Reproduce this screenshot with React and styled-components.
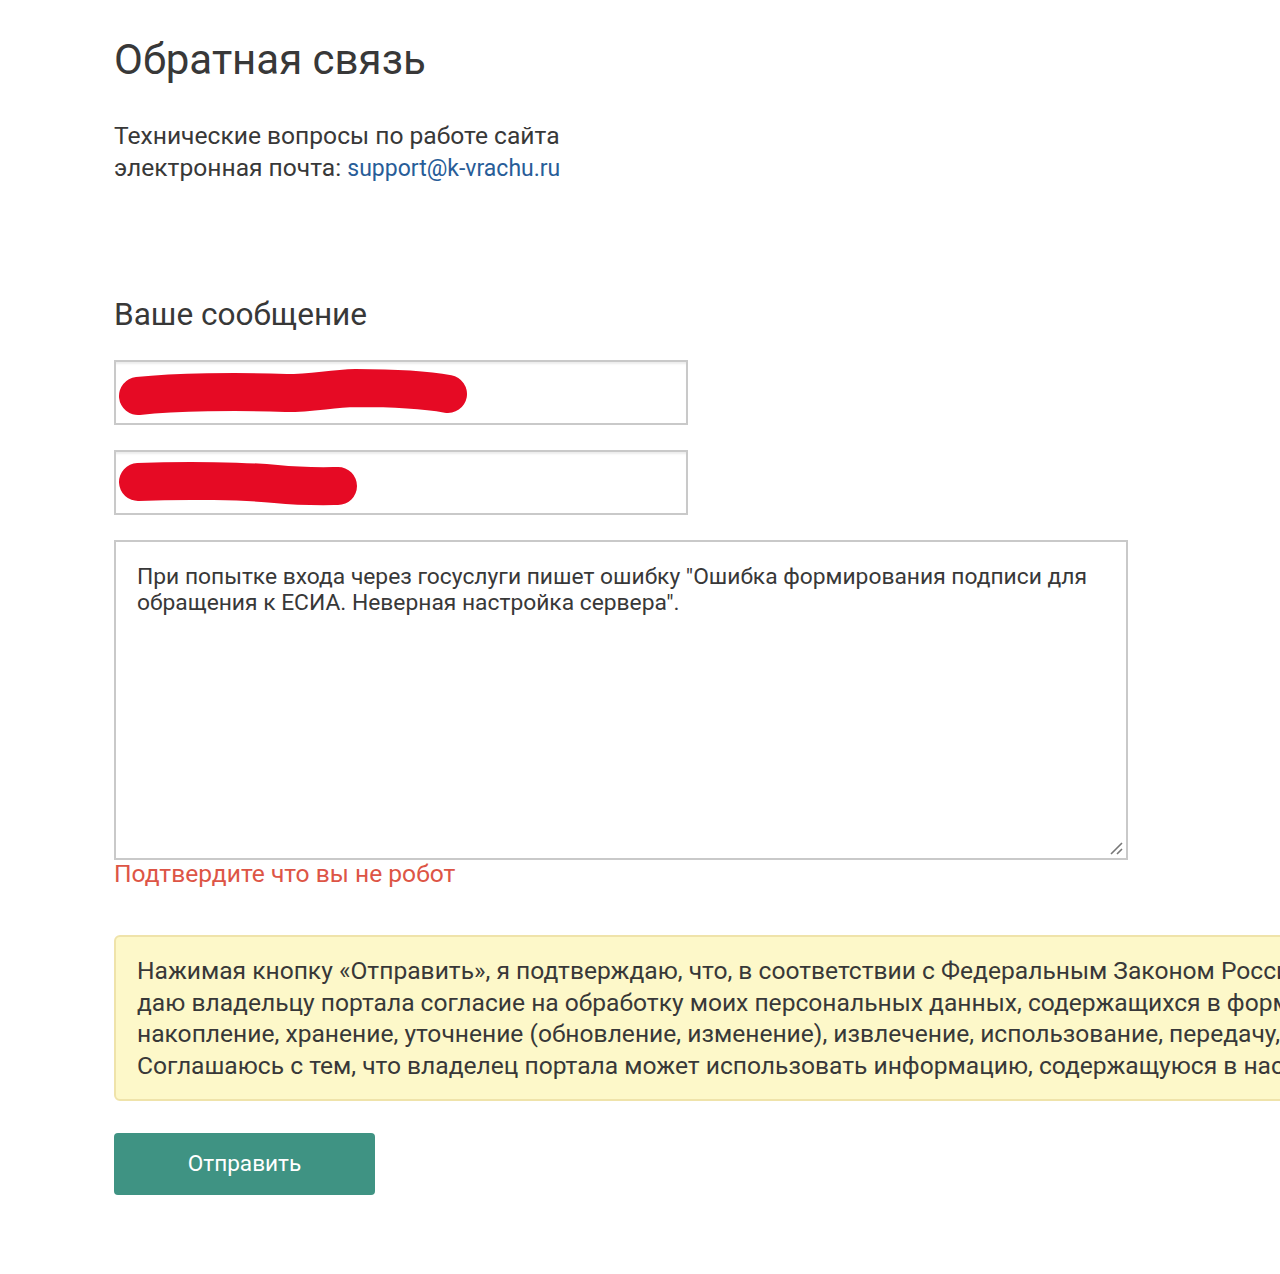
import React from "react";
import styled, { createGlobalStyle } from "styled-components";

const Global = createGlobalStyle`
  html, body { margin: 0; padding: 0; background: #fff; overflow-x: hidden; }
  body { font-family: Roboto, "Noto Sans", Arial, sans-serif; color: #3b3b3b; }
`;

const Page = styled.div`
  padding: 32px 0 0 114px;
  width: 1166px;
  overflow: hidden;
`;

const Title = styled.h1`
  margin: 0;
  font-size: 42px;
  line-height: 56px;
  font-weight: 400;
  color: #383838;
`;

const Info = styled.p`
  margin: 32px 0 0;
  font-size: 24.6px;
  line-height: 32px;
  color: #383838;
`;

const Link = styled.a`
  color: #285d98;
  text-decoration: none;
  font-size: 23px;
  line-height: 0;
`;

const Subtitle = styled.h2`
  margin: 111px 0 0;
  font-size: 31.6px;
  line-height: 40px;
  font-weight: 400;
  color: #383838;
`;

const Form = styled.div`
  display: flex;
  flex-direction: column;
  margin-top: 25px;
`;

const Field = styled.div`
  position: relative;
  width: 574px;
  height: 65px;
  box-sizing: border-box;
  border: 2px solid #c9c9c9;
  box-shadow: inset 0 3px 2px -1px #ececec;
  background: #fff;
  margin-bottom: ${(p) => p.$mb || 0}px;
`;

const Scribble = styled.svg`
  position: absolute;
  left: 0;
  top: 0;
`;

const TextArea = styled.div`
  position: relative;
  width: 1014px;
  height: 320px;
  box-sizing: border-box;
  border: 2px solid #c9c9c9;
  padding: 22px 21px;
  font-size: 22.8px;
  line-height: 26px;
  color: #383838;
`;

const Grip = styled.svg`
  position: absolute;
  right: 2px;
  bottom: 2px;
`;

const Error = styled.div`
  font-size: 24.6px;
  line-height: 28px;
  color: #dd5546;
`;

const Notice = styled.div`
  margin-top: 47px;
  width: 1400px;
  box-sizing: border-box;
  background: #fdf8c9;
  border: 2px solid #efe3aa;
  border-radius: 6px;
  padding: 18px 21px 17px;
  font-size: 24.6px;
  line-height: 31.7px;
  color: #383838;
  white-space: nowrap;
`;

const Button = styled.button`
  margin-top: 32px;
  width: 261px;
  height: 62px;
  border: none;
  border-radius: 4px;
  background: #3f9383;
  color: #fff;
  font-family: Roboto, "Noto Sans", Arial, sans-serif;
  font-size: 22.6px;
  padding: 0;
  align-self: flex-start;
`;

export default function App() {
  return (
    <>
      <Global />
      <Page>
        <Title>Обратная связь</Title>
        <Info>
          Технические вопросы по работе сайта
          <br />
          электронная почта: <Link href="#">support@k-vrachu.ru</Link>
        </Info>
        <Subtitle>Ваше сообщение</Subtitle>
        <Form>
          <Field $mb={25}>
            <Scribble width="360" height="65" viewBox="0 0 360 65">
              <path
                d="M22 34 C60 30 120 29 170 31 C200 31 210 27 240 26 C280 26 310 28 332 32"
                stroke="#e60a24"
                strokeWidth="38"
                strokeLinecap="round"
                fill="none"
              />
            </Scribble>
          </Field>
          <Field $mb={25}>
            <Scribble width="260" height="65" viewBox="0 0 260 65">
              <path
                d="M22 30 C70 28 130 29 160 32 C190 35 215 34 222 34"
                stroke="#e60a24"
                strokeWidth="38"
                strokeLinecap="round"
                fill="none"
              />
            </Scribble>
          </Field>
          <TextArea>
            При попытке входа через госуслуги пишет ошибку "Ошибка формирования подписи для
            <br />
            обращения к ЕСИА. Неверная настройка сервера".
            <Grip width="16" height="16" viewBox="0 0 16 16">
              <path d="M14 3 L3 14 M14 9 L9 14" stroke="#777" strokeWidth="1.6" fill="none" />
            </Grip>
          </TextArea>
          <Error>Подтвердите что вы не робот</Error>
          <Notice>
            Нажимая кнопку «Отправить», я подтверждаю, что, в соответствии с Федеральным Законом России от 27.07.2006 №152-ФЗ «О персональных данных»,
            <br />
            даю владельцу портала согласие на обработку моих персональных данных, содержащихся в форме обратной связи, включая сбор, систематизацию,
            <br />
            накопление, хранение, уточнение (обновление, изменение), извлечение, использование, передачу, обезличивание, блокирование, уничтожение.
            <br />
            Соглашаюсь с тем, что владелец портала может использовать информацию, содержащуюся в настоящей форме, для ответа на обращение.
          </Notice>
          <Button>Отправить</Button>
        </Form>
      </Page>
    </>
  );
}
